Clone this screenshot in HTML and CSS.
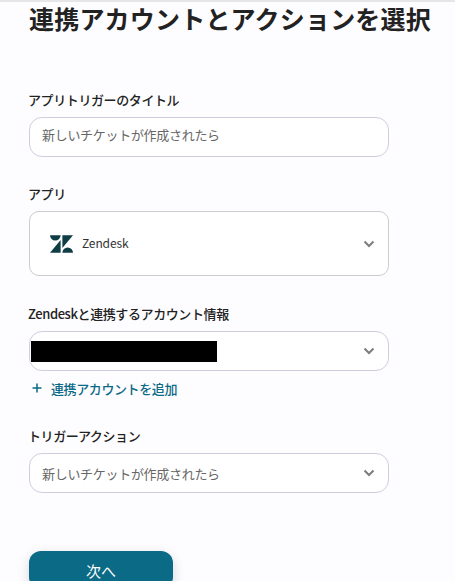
FILE: index.html
```html
<!DOCTYPE html>
<html lang="ja">
  <head>
    <meta charset="UTF-8" />
    <title>連携アカウントとアクションを選択</title>
    <link rel="stylesheet" href="styles.css">
  </head>
  <body>
    <main class="page">
      <h1 class="title">連携アカウントとアクションを選択</h1>

      <div class="field field-first">
        <label class="label">アプリトリガーのタイトル</label>
        <div class="box">
          <span class="value value-input">新しいチケットが作成されたら</span>
        </div>
      </div>

      <div class="field field-app">
        <label class="label">アプリ</label>
        <div class="box box-app">
          <svg class="logo" viewBox="0 2.9 24 18.2" aria-hidden="true">
            <path d="M12.914 2.904V16.29L24 2.904ZM0 2.904a5.54 5.54 0 0 0 11.086 0zm12.914 18.192a5.54 5.54 0 0 1 11.086 0zM0 21.096 11.086 7.71V21.096Z" />
          </svg>
          <span class="app-name">Zendesk</span>
          <svg class="chevron" viewBox="0 0 12 8" aria-hidden="true">
            <path d="M1.5 1.5 6 6l4.500-4.500" />
          </svg>
        </div>
      </div>

      <div class="field field-account">
        <label class="label">Zendeskと連携するアカウント情報</label>
        <div class="box box-account">
          <span class="redacted"></span>
          <svg class="chevron" viewBox="0 0 12 8" aria-hidden="true">
            <path d="M1.5 1.5 6 6l4.500-4.500" />
          </svg>
        </div>
        <a class="add-link">
          <svg class="plus" viewBox="0 0 10 10" aria-hidden="true">
            <path d="M5 .5v9M.5 5h9" />
          </svg>
          連携アカウントを追加
        </a>
      </div>

      <div class="field field-action">
        <label class="label">トリガーアクション</label>
        <div class="box">
          <span class="value">新しいチケットが作成されたら</span>
          <svg class="chevron" viewBox="0 0 12 8" aria-hidden="true">
            <path d="M1.5 1.5 6 6l4.500-4.500" />
          </svg>
        </div>
      </div>

      <button class="next" type="button">次へ</button>
    </main>
  </body>
</html>
```

FILE: styles.css
```css
html,
body {
  height: 100%;
  overflow: hidden;
}
body {
  margin: 0;
  background-color: #fdfcfe;
  color: #222222;
  font-family: "Noto Sans CJK JP", "Noto Sans", sans-serif;
  border-top: 2px solid #e6e6e6;
  box-sizing: border-box;
}
.page {
  width: 360px;
  margin-left: 29px;
}
.title {
  margin: 0;
  height: 36px;
  line-height: 32px;
  font-size: 25px;
  font-weight: 700;
  letter-spacing: 0.2px;
  white-space: nowrap;
}
.field-first {
  margin-top: 52px;
}
.field-app {
  margin-top: 27px;
}
.field-account {
  margin-top: 28px;
}
.field-action {
  margin-top: 28px;
}
.label {
  display: block;
  height: 20px;
  line-height: 20px;
  margin-bottom: 7px;
  margin-left: -1px;
  font-size: 13px;
  font-weight: 500;
  letter-spacing: -0.4px;
}
.box {
  display: flex;
  align-items: center;
  box-sizing: border-box;
  height: 40px;
  padding: 0 13px 0 12px;
  border: 1px solid #cdcfdc;
  border-radius: 13px;
  background-color: #ffffff;
}
.box-app {
  height: 65px;
  padding-left: 20px;
  border-color: #cccccc;
  border-radius: 10px;
}
.box-account {
  padding-left: 1px;
}
.value {
  font-size: 13px;
  color: #666666;
  letter-spacing: -0.3px;
}
.value-input {
  margin-bottom: 6px;
}
.logo {
  width: 23px;
  height: 18px;
  fill: #0f3d45;
}
.app-name {
  margin-left: 9px;
  margin-bottom: 2px;
  font-size: 12px;
  color: #333333;
  letter-spacing: -0.1px;
}
.chevron {
  width: 12px;
  height: 8px;
  margin-left: auto;
  fill: none;
  stroke: #7d7d7d;
  stroke-width: 2;
}
.redacted {
  width: 186px;
  height: 21px;
  background-color: #000000;
}
.add-link {
  display: flex;
  align-items: center;
  height: 20px;
  margin-top: 7px;
  padding-left: 3px;
  font-size: 13px;
  font-weight: 500;
  color: #0b6a85;
  letter-spacing: -0.4px;
}
.plus {
  width: 10px;
  height: 10px;
  margin-right: 9px;
  fill: none;
  stroke: #0b6a85;
  stroke-width: 1.5;
}
.next {
  display: block;
  width: 144px;
  height: 38px;
  margin-top: 58px;
  border: none;
  border-radius: 12px;
  background-color: #0b6a85;
  color: #ffffff;
  font-family: inherit;
  font-size: 15px;
  box-shadow: 0 4px 12px rgba(60, 60, 90, 0.2);
}
```
